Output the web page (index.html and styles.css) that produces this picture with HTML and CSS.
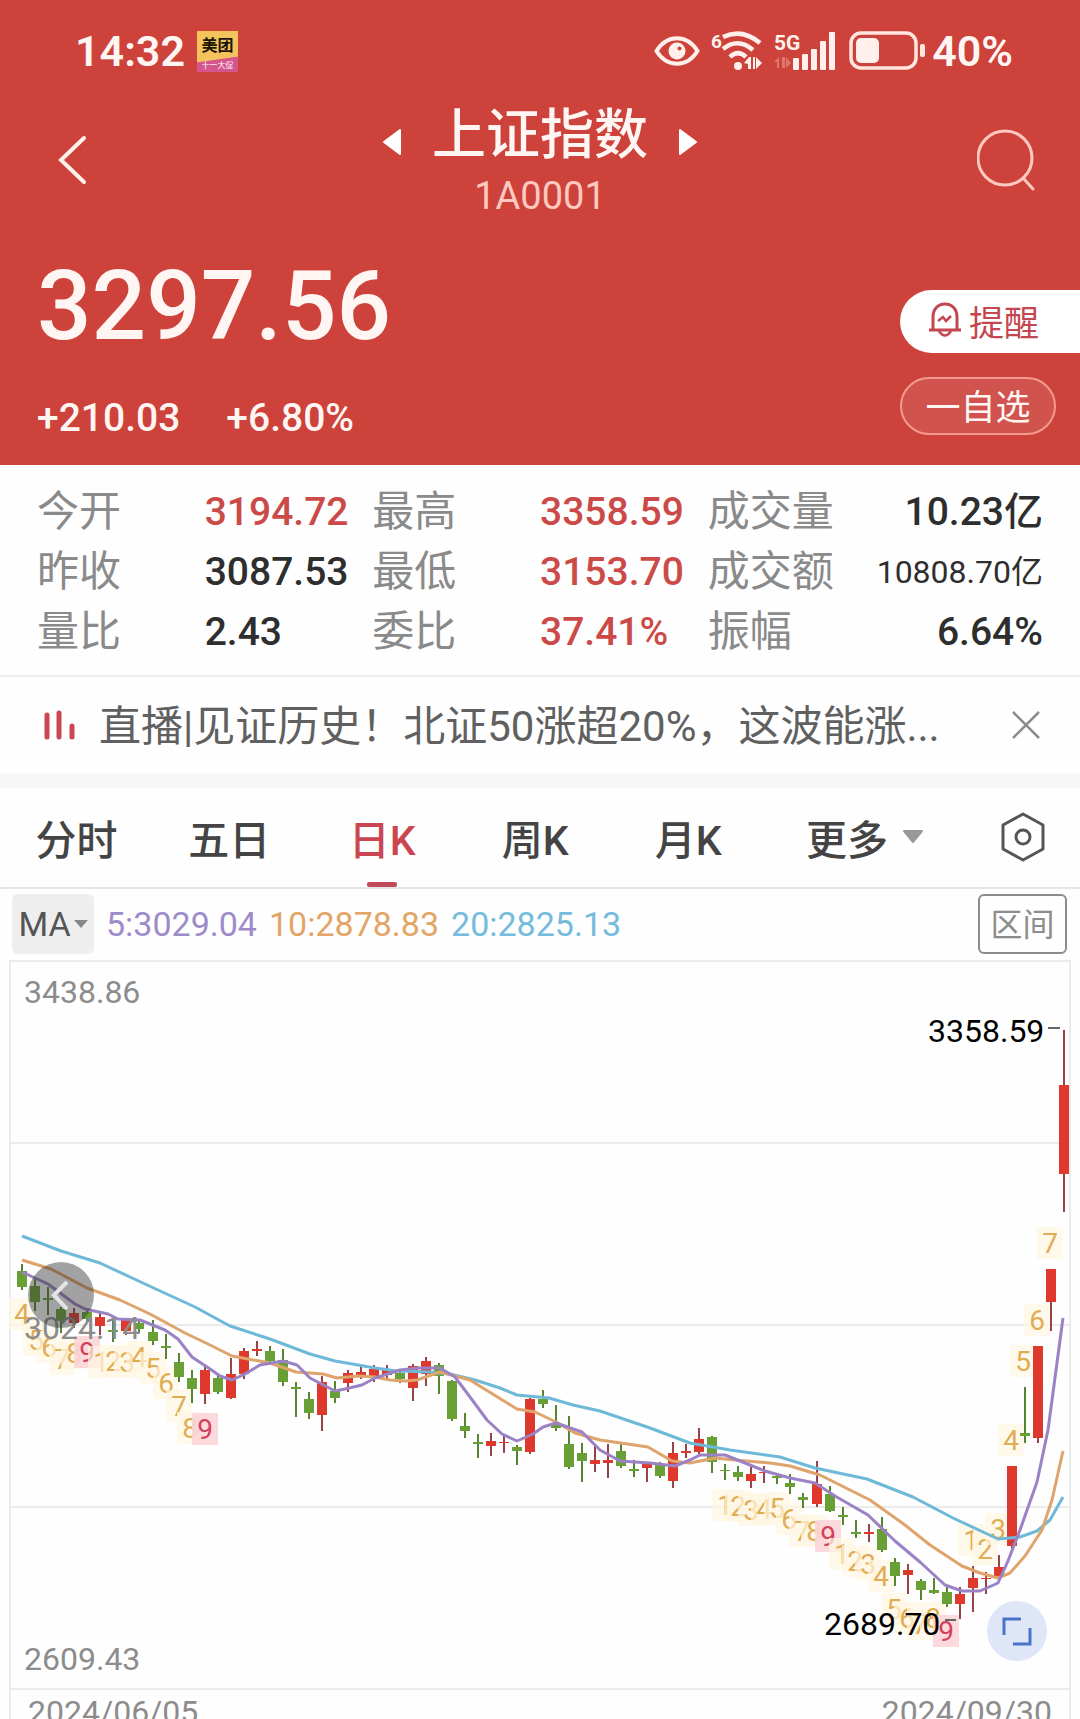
FILE: index.html
```html
<!DOCTYPE html>
<html lang="zh-CN">
  <head>
    <meta charset="utf-8">
    <title>上证指数 1A0001</title>
    <meta name="viewport" content="width=device-width, initial-scale=1">
    <link rel="stylesheet" href="styles.css">
  </head>
  <body>
    <header class="header">
      <div class="status-bar">
        <span class="time">14:32</span>
        <div class="app-badge">
          <span class="app-name">美团</span>
          <span class="app-promo">十一大促</span>
        </div>
        <div class="status-icons">
          <svg class="eye" width="46" height="32" viewBox="0 0 46 32">
            <path d="M2.500 16C13-1 33-1 43.500 16C33 33 13 33 2.500 16Z" fill="none" stroke="#fff0ec" stroke-width="4"/>
            <circle cx="23" cy="16" r="8.500" fill="#fff0ec"/>
            <circle cx="25.500" cy="13.500" r="2" fill="#cd433b"/>
          </svg>
          <svg class="wifi" width="52" height="42" viewBox="0 0 52 42">
            <text x="0" y="18" font-size="19" font-weight="700" fill="#fff0ec">6</text>
            <g fill="none" stroke="#fff0ec" stroke-width="4.500">
              <path d="M12 7Q31-2 49 13"/>
              <path d="M12 19Q27 7 42 20"/>
              <path d="M19 27Q27 19 35 27"/>
            </g>
            <circle cx="27" cy="36" r="4" fill="#fff0ec"/>
            <path d="M33 33L38 27H40V39H37V34ZM42 27H44V39H42ZM45 27L51 33L45 39Z" fill="#fff0ec"/>
          </svg>
          <svg class="signal" width="64" height="42" viewBox="0 0 64 42">
            <text x="0" y="20" font-size="21" font-weight="700" fill="#fff0ec">5G</text>
            <path d="M0 32L5 27V38H3V32ZM8 27H11V38H8ZM12 27L17 33L12 38Z" fill="#e0766f"/>
            <g fill="#fff0ec">
              <rect x="19" y="28" width="6" height="12" rx="1"/>
              <rect x="28" y="24" width="6" height="16" rx="1"/>
              <rect x="37" y="19" width="6" height="21" rx="1"/>
              <rect x="46" y="11" width="6" height="29" rx="1"/>
              <rect x="55" y="2" width="6" height="38" rx="1"/>
            </g>
          </svg>
          <svg class="battery" width="78" height="40" viewBox="0 0 78 40">
            <rect x="2" y="2" width="65" height="35" rx="10" fill="none" stroke="#ffe6e0" stroke-width="3.500"/>
            <rect x="7" y="7" width="23" height="25" rx="5" fill="#fff0ec"/>
            <rect x="71" y="13" width="5" height="13" rx="2" fill="#ffe6e0"/>
          </svg>
          <span class="time">40%</span>
        </div>
      </div>

      <nav class="nav">
        <button class="icon-btn back" type="button" aria-label="返回">
          <svg width="30" height="50" viewBox="0 0 30 50"><path d="M27 3L4 25L27 47" fill="none" stroke="#fff0ec" stroke-width="4" stroke-linecap="round"/></svg>
        </button>
        <div class="title-block">
          <div class="title-row">
            <button class="icon-btn" type="button" aria-label="上一个">
              <svg width="20" height="28" viewBox="0 0 20 28"><path d="M2 14L18 2V26Z" fill="#fff" stroke="#fff" stroke-width="2" stroke-linejoin="round"/></svg>
            </button>
            <h1 class="title">上证指数</h1>
            <button class="icon-btn" type="button" aria-label="下一个">
              <svg width="20" height="28" viewBox="0 0 20 28"><path d="M18 14L2 2V26Z" fill="#fff" stroke="#fff" stroke-width="2" stroke-linejoin="round"/></svg>
            </button>
          </div>
          <div class="code">1A0001</div>
        </div>
        <button class="icon-btn search" type="button" aria-label="搜索">
          <svg width="60" height="62" viewBox="0 0 60 62"><circle cx="28" cy="29" r="27" fill="none" stroke="#ffc9c0" stroke-width="3"/><path d="M47 50L56 60" stroke="#ffc9c0" stroke-width="3" stroke-linecap="round"/></svg>
        </button>
      </nav>

      <section class="quote">
        <div>
          <div class="price">3297.56</div>
          <div class="change"><span>+210.03</span><span>+6.80%</span></div>
        </div>
        <div class="actions">
          <button class="remind" type="button">
            <svg width="34" height="36" viewBox="0 0 34 36" fill="none" stroke="#c44650" stroke-width="3">
              <path d="M1 28H33M5 28V15C5 7 10 2 17 2S29 7 29 15V28"/>
              <path d="M11 29Q17 38 23 29M10 19L15 15L18 19L23 14" stroke-width="2.500"/>
            </svg>
            提醒
          </button>
          <button class="favorite" type="button">一自选</button>
        </div>
      </section>
    </header>

    <section class="stats">
      <dl class="stat-group">
        <dt>今开</dt><dd class="up">3194.72</dd>
        <dt>昨收</dt><dd>3087.53</dd>
        <dt>量比</dt><dd>2.43</dd>
      </dl>
      <dl class="stat-group">
        <dt>最高</dt><dd class="up">3358.59</dd>
        <dt>最低</dt><dd class="up">3153.70</dd>
        <dt>委比</dt><dd class="up">37.41%</dd>
      </dl>
      <dl class="stat-group stat-right">
        <dt>成交量</dt><dd>10.23亿</dd>
        <dt>成交额</dt><dd class="small">10808.70亿</dd>
        <dt>振幅</dt><dd>6.64%</dd>
      </dl>
    </section>

    <div class="news">
      <svg width="32" height="30" viewBox="0 0 32 30" stroke="#cb4650" stroke-width="5" stroke-linecap="round"><path d="M3 5V27M15 3V27M28 16V27"/></svg>
      <a class="news-link" href="#">直播|见证历史！北证50涨超20%，这波能涨...</a>
      <button class="icon-btn" type="button" aria-label="关闭">
        <svg width="28" height="28" viewBox="0 0 28 28"><path d="M1 1L27 27M27 1L1 27" stroke="#8c8c8c" stroke-width="2.500"/></svg>
      </button>
    </div>

    <nav class="tabs">
      <button class="tab" type="button">分时</button>
      <button class="tab" type="button">五日</button>
      <button class="tab active" type="button">日K</button>
      <button class="tab" type="button">周K</button>
      <button class="tab" type="button">月K</button>
      <button class="tab" type="button">更多
        <svg width="22" height="14" viewBox="0 0 22 14"><path d="M2 1H20L11 12Z" fill="#999" stroke="#999" stroke-width="2" stroke-linejoin="round"/></svg>
      </button>
      <button class="tab" type="button" aria-label="设置">
        <svg width="44" height="50" viewBox="0 0 44 50" fill="none" stroke="#555" stroke-width="3" stroke-linejoin="round"><path d="M22 2L42 13V37L22 48L2 37V13Z"/><circle cx="22" cy="25" r="7"/></svg>
      </button>
    </nav>

    <div class="indicators">
      <button class="ma-btn" type="button">MA
        <svg width="14" height="10" viewBox="0 0 14 10"><path d="M0 1H14L7 9Z" fill="#888"/></svg>
      </button>
      <span class="ma5">5:3029.04</span>
      <span class="ma10">10:2878.83</span>
      <span class="ma20">20:2825.13</span>
      <button class="range-btn" type="button">区间</button>
    </div>

    <main class="chart">
      <svg id="kline" class="kline" viewBox="0 960 1080 728">
        <g class="grid">
          <path d="M10 1688V961H1070V1688M10 1143H1070M10 1325H1070M10 1507H1070"/>
        </g>
        <g id="marks"></g>
        <g id="candles"></g>
        <g class="lines">
          <polyline class="line20" points="22,1236 61,1251 100,1263 145,1284 195,1307 230,1326 270,1339 310,1354 335,1361 375,1368 397,1371 430,1372 450,1374 475,1380 500,1388 517,1395 549,1398 573,1405 600,1411 650,1428 690,1443 730,1450 780,1457 815,1468 867,1479 913,1497 953,1518 998,1539 1020,1537 1037,1531 1050,1520 1063,1497"/>
          <polyline class="line10" points="22,1260 51,1269 87,1288 120,1300 150,1314 185,1333 210,1345 232,1356 270,1363 296,1372 323,1374 337,1378 358,1376 375,1377 390,1380 405,1381 417,1380 440,1372 470,1380 517,1409 535,1412 556,1422 575,1433 600,1440 648,1447 672,1461 690,1463 715,1458 735,1460 770,1463 790,1466 820,1475 870,1500 905,1525 930,1545 962,1566 980,1573 998,1578 1010,1573 1025,1556 1042,1530 1052,1500 1063,1451"/>
          <polyline class="line5" points="22,1272 48,1284 75,1304 85,1309 108,1314 118,1319 140,1320 165,1330 178,1339 192,1357 210,1369 220,1376 232,1380 245,1374 260,1365 283,1361 297,1365 310,1378 335,1391 345,1389 362,1385 375,1378 400,1370 418,1368 440,1368 455,1377 470,1397 487,1420 502,1434 517,1441 533,1434 543,1427 556,1423 582,1432 600,1450 620,1461 650,1463 675,1466 690,1460 700,1455 725,1455 745,1463 765,1471 790,1478 815,1483 835,1496 868,1515 895,1541 920,1562 945,1585 962,1591 980,1591 998,1583 1008,1561 1020,1530 1037,1482 1048,1430 1063,1318"/>
        </g>
        <g class="axis-text">
          <text x="24" y="1003">3438.86</text>
          <text x="24" y="1339">3024.14</text>
          <text x="24" y="1670">2609.43</text>
        </g>
        <g class="peak-text">
          <text x="928" y="1042">3358.59</text>
          <text x="824" y="1635">2689.70</text>
          <path d="M1048 1028H1060M945 1620H956"/>
        </g>
      </svg>
      <button class="round-btn prev-btn" type="button" aria-label="向前">
        <svg width="66" height="66" viewBox="0 0 66 66"><path d="M39 20L26 33L39 47" fill="none" stroke="#e4e4e4" stroke-width="4"/></svg>
      </button>
      <button class="round-btn full-btn" type="button" aria-label="全屏">
        <svg width="60" height="60" viewBox="0 0 60 60" fill="none" stroke="#4a74c9" stroke-width="3"><path d="M17 34V18H34M43 27V43H26"/></svg>
      </button>
      <div class="dates"><span>2024/06/05</span><span>2024/09/30</span></div>
    </main>
    <script src="chart.js"></script>
  </body>
</html>
```

FILE: styles.css
```css
* {
  box-sizing: border-box;
}

body {
  margin: 0;
  height: 100vh;
  overflow: hidden;
  font-family: Roboto, "Noto Sans CJK SC", sans-serif;
  color: #2e2e2e;
  background: #fefefe;
}

button {
  font-family: inherit;
  color: inherit;
  border: none;
  background: none;
  padding: 0;
  cursor: pointer;
}

svg {
  display: block;
  flex: none;
}

.header {
  color: #fff6f3;
  background: #cd433b;
}

.status-bar {
  display: flex;
  align-items: center;
  height: 102px;
  padding: 0 67px 0 75px;
}

.time {
  font-size: 43px;
  font-weight: 600;
  line-height: 48px;
}

.app-badge {
  display: flex;
  flex-direction: column;
  width: 41px;
  height: 41px;
  margin-left: 12px;
  text-align: center;
  background: linear-gradient(172deg, #f5c35c 66%, #d5568f 68%);
}

.app-name {
  font-size: 16px;
  font-weight: 700;
  line-height: 30px;
  color: #1d1508;
}

.app-promo {
  font-size: 8px;
  line-height: 10px;
}

.status-icons {
  display: flex;
  align-items: center;
  gap: 11px;
  margin-left: auto;
}

.status-icons .time {
  margin-left: -6px;
}

.nav {
  display: grid;
  grid-template-columns: 1fr auto 1fr;
  align-items: center;
  height: 108px;
  padding: 0 43px;
}

.icon-btn {
  display: flex;
  align-items: center;
}

.back {
  padding-left: 14px;
}

.search {
  justify-self: end;
}

.title-row {
  display: flex;
  align-items: center;
  gap: 30px;
}

.title-row .icon-btn {
  padding-top: 12px;
}

.title {
  margin: 0;
  font-size: 54px;
  font-weight: 500;
  line-height: 60px;
}

.code {
  margin-top: 8px;
  font-size: 38px;
  line-height: 44px;
  text-align: center;
  color: #ffc9c0;
}

.title-block {
  padding-top: 4px;
}

.quote {
  display: flex;
  justify-content: space-between;
  padding: 45px 0 23px 37px;
}

.price {
  font-size: 96px;
  font-weight: 500;
  line-height: 102px;
}

.change {
  display: flex;
  gap: 46px;
  margin-top: 37px;
  font-size: 39px;
  font-weight: 500;
  line-height: 48px;
}

.actions {
  display: flex;
  flex-direction: column;
  gap: 24px;
  width: 180px;
  padding-top: 35px;
}

.remind,
.favorite {
  display: flex;
  align-items: center;
  padding-bottom: 3px;
  font-size: 35px;
}

.remind {
  gap: 7px;
  height: 63px;
  padding-left: 28px;
  border-radius: 32px 0 0 32px;
  color: #c44650;
  background: #fff;
}

.favorite {
  justify-content: center;
  width: 156px;
  height: 58px;
  border: 2px solid #f39a90;
  border-radius: 29px;
  background: #d1534e;
}

.stats {
  display: flex;
  padding: 17px 37px 13px;
  border-bottom: 2px solid #ececec;
}

.stat-group {
  display: grid;
  flex: 1;
  grid-template-columns: 1fr 1fr;
  margin: 0;
  font-size: 39px;
  font-weight: 500;
  line-height: 60px;
}

.stat-group dt {
  font-size: 42px;
  font-weight: 400;
  color: #8a8a8a;
}

.stat-group dd {
  margin: 0;
  white-space: nowrap;
}

.stat-right {
  grid-template-columns: auto 1fr;
}

.stat-right dd {
  text-align: right;
}

.stat-group .up {
  color: #cb4a48;
}

.stat-group .small {
  font-size: 32px;
  font-weight: 400;
}

.news {
  display: flex;
  align-items: center;
  height: 96px;
  padding: 0 40px 0 44px;
}

.news-link {
  flex: 1;
  margin-left: 23px;
  padding-top: 4px;
  font-size: 42px;
  line-height: 60px;
  white-space: nowrap;
  color: #606060;
  text-decoration: none;
}

.tabs {
  display: grid;
  grid-template-columns: repeat(5, 16fr) 21fr 12fr;
  height: 116px;
  border-top: 15px solid #f7f7f7;
  border-bottom: 2px solid #e6e6e6;
}

.tab {
  display: flex;
  position: relative;
  align-items: center;
  justify-content: center;
  gap: 14px;
  padding-bottom: 2px;
  font-size: 41px;
  font-weight: 500;
  color: #444;
}

.tab.active {
  color: #cb4650;
}

.tab.active::after {
  content: "";
  position: absolute;
  bottom: 0;
  width: 30px;
  height: 5px;
  border-radius: 2px;
  background: #bf4a58;
}

.indicators {
  display: flex;
  align-items: center;
  gap: 12px;
  padding: 5px 13px 6px 12px;
  font-size: 34px;
}

.ma-btn {
  display: flex;
  align-items: center;
  justify-content: center;
  gap: 3px;
  width: 82px;
  height: 60px;
  border-radius: 6px;
  font-size: 34px;
  color: #555;
  background: #eee;
}

.ma5 {
  color: #9d8cc9;
}

.ma10 {
  color: #e2a566;
}

.ma20 {
  color: #74bbdc;
}

.range-btn {
  width: 89px;
  height: 60px;
  margin-left: auto;
  padding-bottom: 4px;
  border: 2px solid #8c8c8c;
  border-radius: 6px;
  font-size: 32px;
  color: #8c8c8c;
}

.chart {
  position: relative;
}

.kline {
  width: 100%;
  height: auto;
}

.grid path {
  fill: none;
  stroke: #ebebeb;
  stroke-width: 2;
}

.lines polyline {
  fill: none;
  stroke-width: 3;
  stroke-linejoin: round;
}

.line5 {
  stroke: #9b82c4;
}

.line10 {
  stroke: #dfa36c;
}

.line20 {
  stroke: #6fb9d8;
}

.axis-text {
  font-size: 32px;
  fill: #8c8c8c;
}

.peak-text {
  font-size: 32px;
  fill: #000;
}

.peak-text path {
  stroke: #666;
  stroke-width: 2;
}

.mark {
  font-size: 28px;
  text-anchor: middle;
  fill: #e0ad55;
}

.mark.nine {
  fill: #d2405a;
}

.mark-bg {
  fill: #fff6e2;
  fill-opacity: 0.7;
}

.mark-bg.nine {
  fill: #fbd5d9;
  fill-opacity: 0.9;
}

.candle-up {
  fill: #df382c;
}

.candle-down {
  fill: #68a035;
}

.wick-up {
  fill: #96444a;
}

.wick-down {
  fill: #568532;
}

.round-btn {
  position: absolute;
  border-radius: 50%;
}

.prev-btn {
  top: 302px;
  left: 28px;
  background: rgba(50, 50, 50, 0.45);
}

.full-btn {
  right: 33px;
  bottom: 73px;
  background: #dfe6f8;
}

.dates {
  display: flex;
  justify-content: space-between;
  margin: 0 9px;
  padding: 2px 17px 2px;
  border: 2px solid #ebebeb;
  border-bottom: none;
  font-size: 32px;
  line-height: 40px;
  color: #8c8c8c;
}
```

FILE: chart.js
```js
// high, body top, body bottom, low, up (1) or down (0)
var candles = [
  [1264,1271,1287,1290,0], [1278,1286,1302,1311,0], [1287,1298,1300,1315,0], [1307,1309,1321,1333,0],
  [1308,1313,1323,1328,1], [1309,1312,1319,1322,0], [1312,1317,1326,1335,1], [1318,1330,1332,1342,0],
  [1318,1320,1331,1335,1], [1319,1323,1329,1333,0], [1320,1332,1341,1345,0], [1334,1346,1348,1359,0],
  [1353,1362,1377,1382,0], [1370,1378,1389,1403,0], [1365,1370,1394,1404,1], [1376,1378,1392,1394,0],
  [1358,1374,1398,1399,1], [1348,1351,1374,1379,1], [1341,1349,1351,1356,1], [1346,1351,1361,1363,0],
  [1349,1360,1382,1386,0], [1382,1387,1389,1417,0], [1392,1399,1413,1419,0], [1376,1382,1415,1431,1],
  [1381,1391,1398,1403,0], [1370,1373,1383,1392,1], [1367,1372,1375,1379,1], [1365,1369,1377,1382,1],
  [1365,1369,1375,1379,1], [1371,1373,1379,1383,0], [1364,1366,1388,1401,1], [1357,1361,1374,1386,1],
  [1363,1365,1376,1394,0], [1380,1381,1419,1421,0], [1413,1426,1431,1438,0], [1434,1442,1444,1458,0],
  [1433,1441,1446,1456,1], [1434,1442,1443,1453,1], [1445,1447,1451,1465,0], [1398,1399,1452,1454,1],
  [1390,1399,1404,1408,0], [1405,1423,1428,1431,0], [1416,1444,1467,1469,0], [1443,1453,1461,1482,0],
  [1446,1460,1464,1472,1], [1444,1460,1463,1478,1], [1444,1451,1466,1468,0], [1460,1469,1471,1477,0],
  [1463,1464,1468,1482,1], [1462,1464,1476,1478,0], [1442,1453,1481,1488,1], [1444,1451,1453,1458,1],
  [1428,1439,1452,1454,1], [1436,1437,1462,1473,0], [1464,1470,1471,1480,0], [1466,1472,1477,1481,0],
  [1467,1474,1481,1488,1], [1466,1472,1473,1483,1], [1474,1476,1478,1484,0], [1474,1483,1487,1494,0],
  [1493,1497,1500,1508,0], [1461,1484,1504,1507,1], [1486,1494,1511,1512,0], [1507,1515,1517,1525,0],
  [1520,1532,1534,1538,0], [1524,1532,1534,1542,1], [1517,1529,1550,1552,0], [1558,1562,1576,1586,0],
  [1564,1570,1575,1594,1], [1579,1581,1590,1600,0], [1578,1590,1593,1594,0], [1587,1592,1604,1607,0],
  [1587,1594,1604,1619,1], [1566,1578,1588,1612,1], [1572,1578,1579,1594,1], [1555,1567,1577,1582,1],
  [1466,1466,1546,1550,1], [1387,1433,1436,1443,0], [1346,1346,1438,1443,1], [1269,1269,1302,1331,1],
  [1030,1085,1174,1212,1]
];

// digit, x, y centre
var marks = [
  [4,22,1314], [5,36,1340], [6,49,1347], [7,62,1359], [8,74,1353], [9,87,1352],
  [1,101,1362], [2,113,1361], [3,127,1362], [4,139,1357], [5,153,1368], [6,166,1383], [7,179,1406], [8,190,1428], [9,205,1429],
  [1,725,1505], [2,738,1506], [3,751,1510], [4,764,1509], [5,777,1508], [6,789,1519], [7,802,1531], [8,814,1531], [9,828,1536],
  [1,842,1554], [2,855,1561], [3,868,1564], [4,881,1576],
  [5,894,1609], [6,907,1618], [7,920,1624], [8,933,1618], [9,946,1631],
  [1,971,1540], [2,985,1549], [3,998,1529], [4,1011,1440], [5,1023,1361], [6,1037,1320], [7,1050,1243]
];

var NS = "http://www.w3.org/2000/svg";

function add(parent, name, attrs) {
  var el = document.createElementNS(NS, name);
  for (var key in attrs) {
    el.setAttribute(key, attrs[key]);
  }
  document.getElementById(parent).appendChild(el);
  return el;
}

for (var i = 0; i < candles.length; i++) {
  var c = candles[i];
  var x = Math.round(22.3 + i * 13.02);
  var dir = c[4] ? "up" : "down";

  add("candles", "rect", { x: x - 1, y: c[0], width: 2, height: c[3] - c[0], class: "wick-" + dir });
  add("candles", "rect", { x: x - 5, y: c[1], width: 10, height: c[2] - c[1], class: "candle-" + dir });
}

for (var j = 0; j < marks.length; j++) {
  var m = marks[j];
  var nine = m[0] == 9 ? " nine" : "";

  add("marks", "rect", { x: m[1] - 13, y: m[2] - 16, width: 26, height: 32, class: "mark-bg" + nine });
  add("marks", "text", { x: m[1], y: m[2] + 10, class: "mark" + nine }).textContent = m[0];
}
```
